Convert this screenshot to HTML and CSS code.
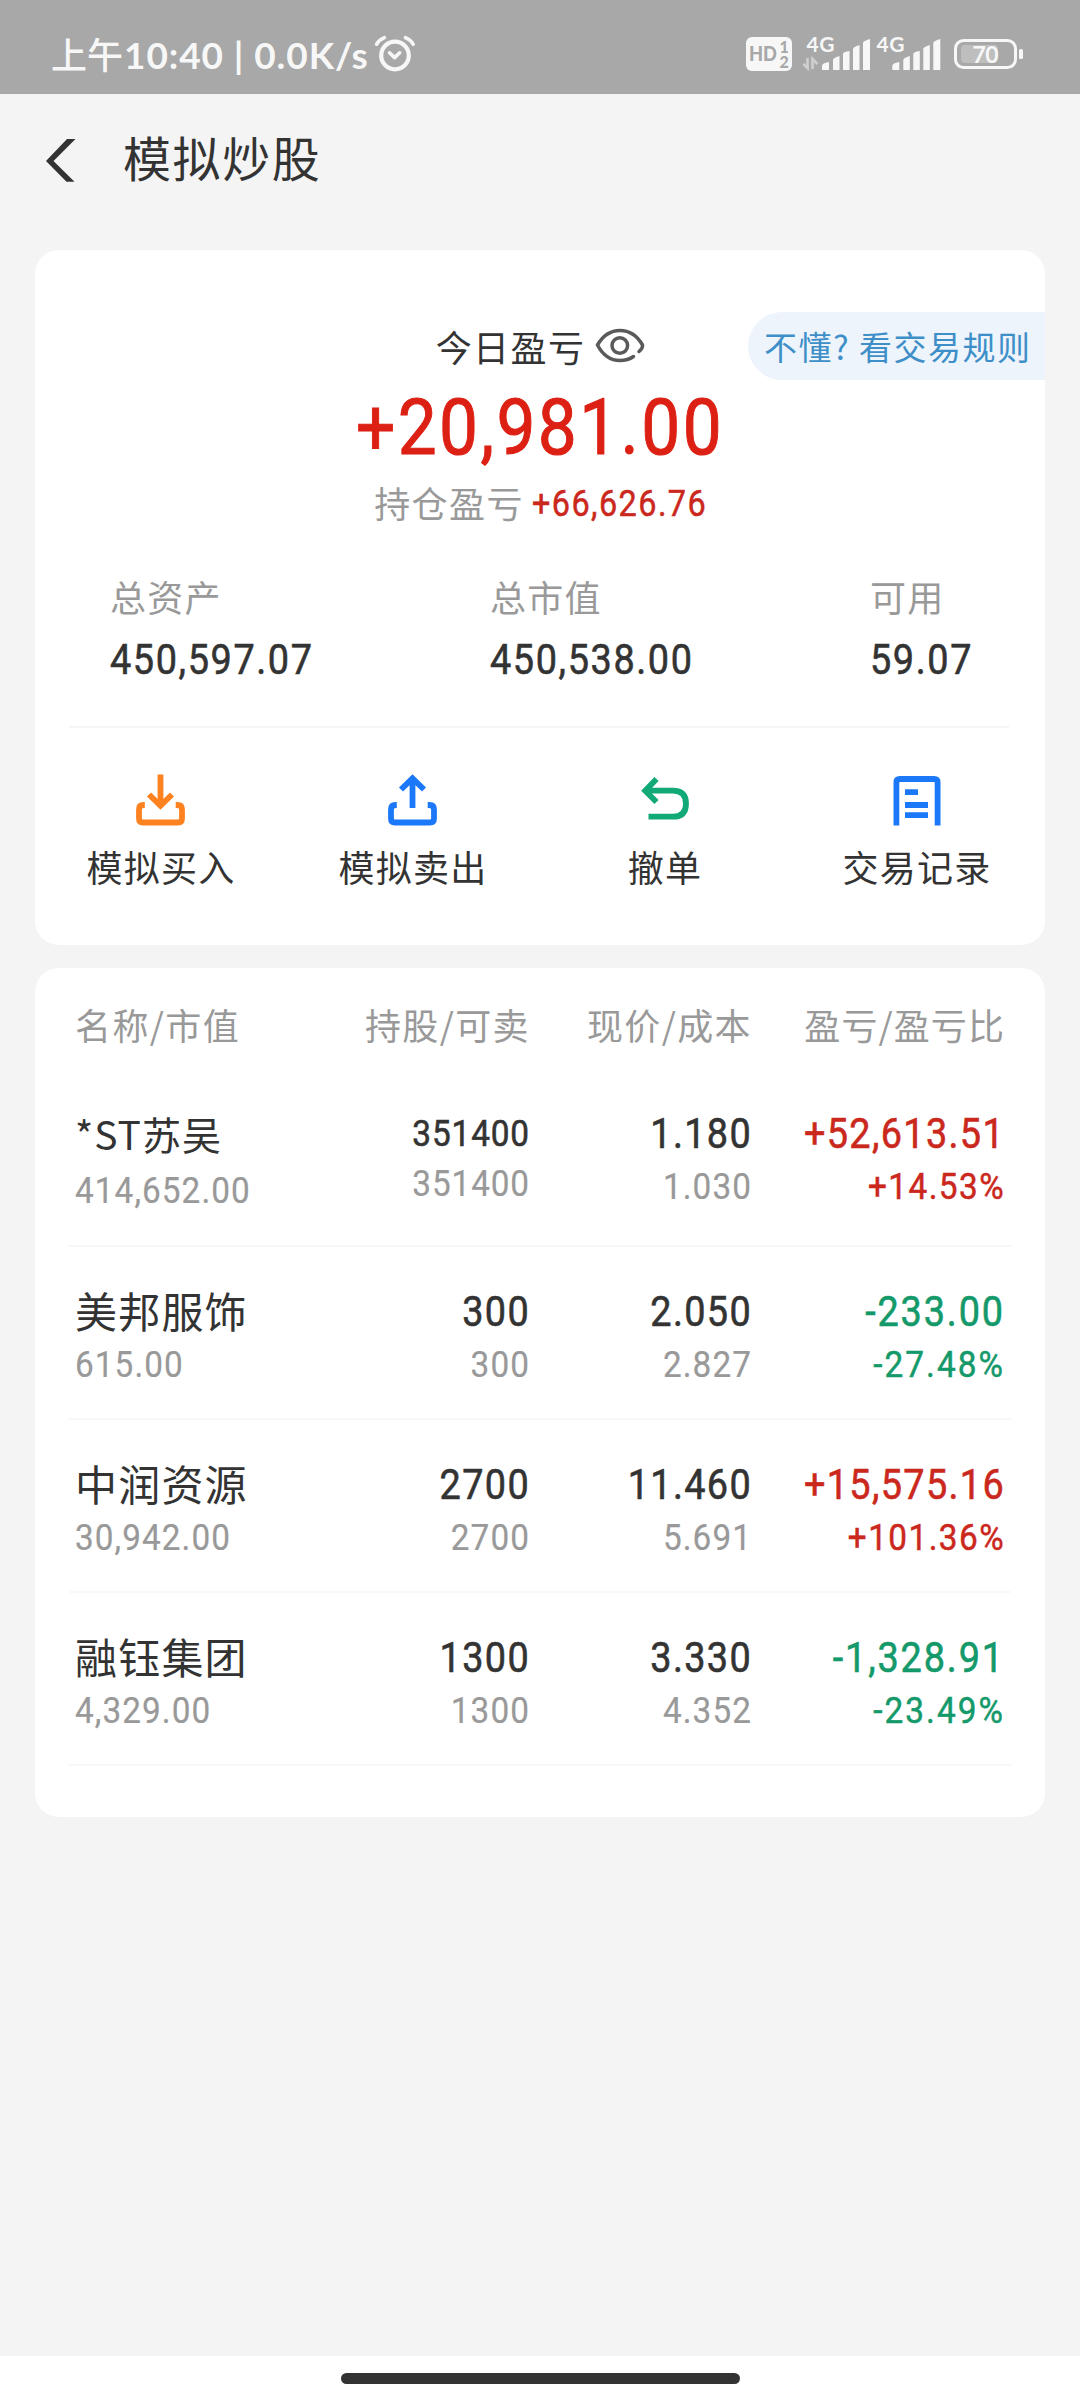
FILE: index.html
```html
<!DOCTYPE html>
<html lang="zh-CN">
<head>
<meta charset="utf-8">
<title>模拟炒股</title>
<link rel="stylesheet" href="styles.css">
</head>
<body>
<div class="screen">
  <header class="status">
    <div class="status-left">
      <span class="clock">上午<span class="latin">10:40 | 0.0K/s</span></span>
      <svg class="alarm" width="42" height="40" viewBox="374 34 42 40" fill="none" stroke="#f7f7f7" stroke-linecap="round">
        <circle cx="395" cy="55.5" r="13.8" stroke-width="4.2"/>
        <path d="M389.5 52.8l5.1 4.8 5.1-4.8" stroke-width="3.6" stroke-linejoin="round"/>
        <path d="M376.6 44.2q3-4.600 7.800-6.500M413.200 44.200q-3-4.600-7.800-6.500" stroke-width="3.600"/>
      </svg>
    </div>
    <svg class="signals" width="280" height="44" viewBox="746 32 280 44">
      <rect x="746" y="37" width="46" height="34" rx="6" fill="#f7f7f7"/>
      <text class="hd" x="749" y="61" textLength="28" lengthAdjust="spacingAndGlyphs">HD</text>
      <text class="sim" x="779.500" y="52.500">1</text>
      <text class="sim" x="779.500" y="68">2</text>
      <g fill="#f7f7f7">
        <text class="net" x="806.500" y="51.500" textLength="28">4G</text>
        <text class="net" x="876.500" y="51.500" textLength="28">4G</text>
        <path id="bars" d="M822 70v-4q0-3 7-4v8zM833 70V60q0-2 6.500-4v14zM843 70V54q0-2 6.500-3v19zM853 70V49q0-2 6.500-4v25zM863 70V43q0-2 7-4v31z"/>
        <use href="#bars" x="70.300"/>
      </g>
      <path d="M807.500 58v10l-4-4M809 68h-2M812.500 69V59l5 5" fill="none" stroke="#cfcfcf" stroke-width="2.600"/>
      <rect x="955.500" y="40.500" width="60" height="27" rx="8" fill="none" stroke="#f7f7f7" stroke-width="3"/>
      <rect x="961" y="45" width="37" height="18" rx="4" fill="#bebebe"/>
      <rect x="1019" y="49" width="4" height="10" rx="1.500" fill="#f7f7f7"/>
      <text class="power" x="972.500" y="62.500" textLength="26">70</text>
    </svg>
  </header>

  <nav class="nav">
    <svg class="back" width="30" height="44" viewBox="46 139 30 44"><path d="M67 139h8.500L53.500 161 74.500 181.800H66.500L46 161z" fill="#333"/></svg>
    <h1 class="title">模拟炒股</h1>
  </nav>

  <main class="content">
    <section class="card summary">
      <a class="rules">不懂? 看交易规则</a>
      <div class="today">
        <span>今日盈亏</span>
        <svg width="50" height="36" viewBox="596 328 50 36" fill="none" stroke="#5a5a5a" stroke-width="3.500" stroke-linecap="round">
          <path d="M640 351.500q4-3.500 3.500-6.500c-5.500-9.500-13-14.500-22.500-14.500s-17 5-22.500 14.500c5.500 10.500 13 15.500 22.500 15.500q8 0 13.500-4"/>
          <circle cx="620.800" cy="345.500" r="7.800"/>
        </svg>
      </div>
      <div class="today-value">+20,981.00</div>
      <div class="holding"><span>持仓盈亏</span><b class="holding-value">+66,626.76</b></div>
      <div class="totals">
        <div class="total"><span class="label">总资产</span><b>450,597.07</b></div>
        <div class="total"><span class="label">总市值</span><b>450,538.00</b></div>
        <div class="total"><span class="label">可用</span><b>59.07</b></div>
      </div>
      <div class="actions">
        <a class="action">
          <svg width="60" height="60" viewBox="131 770 60 60" fill="none" stroke="#ff8220" stroke-width="5.800">
            <path d="M160.500 774.500V806M149 794.500l11.500 11.300 11.500-11.300M144.800 805h-1.300q-4.500 0-4.500 4.500v9q0 4 4 4h35q4 0 4-4v-9q0-4.500-4.500-4.500h-1.800"/>
          </svg>模拟买入</a>
        <a class="action">
          <svg width="60" height="60" viewBox="383 770 60 60" fill="none" stroke="#1b78f8" stroke-width="5.800">
            <path d="M412.500 808V779M401 789.500l11.500-11.200 11.500 11.200M396.800 805h-1.300q-4.500 0-4.500 4.500v9q0 4 4 4h35q4 0 4-4v-9q0-4.500-4.500-4.500h-1.800"/>
          </svg>模拟卖出</a>
        <a class="action">
          <svg width="60" height="60" viewBox="635 770 60 60" fill="none" stroke="#11a978" stroke-width="5.800">
            <path d="M656.500 779l-11.300 11.700 11.300 11.300M645 790.700h28q13 0 13 13t-13 13h-24.500"/>
          </svg>撤单</a>
        <a class="action">
          <svg width="60" height="60" viewBox="887 770 60 60" fill="none" stroke="#1b78f8" stroke-width="5.800">
            <path d="M896.400 825.500V782.500q0-3.500 3.500-3.500h34.200q3.500 0 3.500 3.500v43M905 792.200h13M905 805h23M905 815.200h23"/>
          </svg>交易记录</a>
      </div>
    </section>

    <section class="card holdings">
      <div class="head">
        <span>名称/市值</span><span>持股/可卖</span><span>现价/成本</span><span class="tight">盈亏/盈亏比</span>
      </div>
      <div class="row first">
        <div class="cell"><strong class="name">*ST苏吴</strong><small>414,652.00</small></div>
        <div class="cell long"><b>351400</b><small>351400</small></div>
        <div class="cell"><b>1.180</b><small>1.030</small></div>
        <div class="cell up"><b>+52,613.51</b><small>+14.53%</small></div>
      </div>
      <div class="row">
        <div class="cell"><strong class="name">美邦服饰</strong><small>615.00</small></div>
        <div class="cell"><b>300</b><small>300</small></div>
        <div class="cell"><b>2.050</b><small>2.827</small></div>
        <div class="cell down"><b>-233.00</b><small>-27.48%</small></div>
      </div>
      <div class="row">
        <div class="cell"><strong class="name">中润资源</strong><small>30,942.00</small></div>
        <div class="cell"><b>2700</b><small>2700</small></div>
        <div class="cell"><b>11.460</b><small>5.691</small></div>
        <div class="cell up"><b>+15,575.16</b><small>+101.36%</small></div>
      </div>
      <div class="row">
        <div class="cell"><strong class="name">融钰集团</strong><small>4,329.00</small></div>
        <div class="cell"><b>1300</b><small>1300</small></div>
        <div class="cell"><b>3.330</b><small>4.352</small></div>
        <div class="cell down"><b>-1,328.91</b><small>-23.49%</small></div>
      </div>
    </section>
  </main>

  <footer class="home"><div class="handle"></div></footer>
</div>
</body>
</html>
```
FILE: styles.css
```css
* { box-sizing: border-box; }

body {
  margin: 0;
  background: #f4f4f4;
  color: #333;
  font-family: "Noto Sans CJK SC", sans-serif;
}

b, small, strong { font-weight: 400; }
svg { display: block; flex: none; }

.screen {
  display: flex;
  flex-direction: column;
  width: 1080px;
  height: 2400px;
}

/* status bar */
.status {
  display: flex;
  justify-content: space-between;
  height: 94px;
  padding: 32px 54px 0 51px;
  background: #a8a8a8;
  color: #f7f7f7;
}
.status-left { display: flex; gap: 4px; }
.clock {
  width: 319px;
  font-size: 36px;
  font-weight: 500;
  line-height: 42px;
  white-space: nowrap;
}
.latin {
  margin-left: 1px;
  font-family: Lato, sans-serif;
  font-size: 37px;
  font-weight: 700;
  letter-spacing: 0.9px;
}
.alarm { margin-top: 2px; }
.signals text { font-family: Lato, sans-serif; font-weight: 700; }
.signals .hd { font-size: 20px; font-weight: 900; fill: #a8a8a8; }
.signals .sim { font-size: 16px; font-weight: 900; fill: #a8a8a8; }
.signals .net { font-size: 21px; }
.signals .power { font-size: 23px; fill: #f7f7f7; }

/* title bar */
.nav {
  display: flex;
  gap: 47px;
  height: 146px;
  padding: 45px 46px 0;
}
.title {
  margin: -13px 0 0;
  font-size: 48px;
  font-weight: 400;
  line-height: 60px;
  letter-spacing: 1.6px;
}

.content {
  display: flex;
  flex: 1;
  flex-direction: column;
  gap: 23px;
  padding: 10px 35px 0;
}
.card {
  border-radius: 24px;
  background: #fff;
}

/* summary card */
.summary {
  position: relative;
  height: 695px;
  padding-top: 71px;
}
.rules {
  position: absolute;
  top: 62px;
  right: 0;
  width: 297px;
  height: 68px;
  padding-left: 16px;
  border-radius: 34px 0 0 34px;
  background: #edf4fc;
  color: #3e8fc8;
  font-size: 33px;
  line-height: 68px;
  letter-spacing: 1.5px;
  white-space: nowrap;
}
.today {
  display: flex;
  align-items: center;
  justify-content: center;
  gap: 10px;
  height: 50px;
  padding-left: 1px;
  font-size: 36px;
  line-height: 49px;
  letter-spacing: 1.4px;
}
.today-value {
  height: 110px;
  color: #dd2014;
  font-family: Roboto, sans-serif;
  font-size: 77px;
  font-weight: 400;
  line-height: 114px;
  letter-spacing: 2.7px;
  text-align: center;
  transform: scaleX(0.9);
  -webkit-text-stroke: 1px #dd2014;
}
.holding {
  display: flex;
  justify-content: center;
  gap: 8px;
  height: 46px;
  color: #999;
  font-size: 36px;
  line-height: 42px;
  letter-spacing: 1.4px;
}
.holding-value {
  width: 174px;
  color: #cb281d;
  font-family: Roboto, sans-serif;
  line-height: 46px;
  letter-spacing: 1.6px;
  transform: scaleX(0.9);
  transform-origin: left;
  -webkit-text-stroke: 0.5px #cb281d;
}
.totals {
  display: flex;
  height: 201px;
  margin: 0 36px 0 34px;
  padding: 40px 0 0 41px;
  border-bottom: 2px solid #f5f5f5;
}
.total { flex: 0 0 380px; }
.total:last-child { flex-basis: 100px; }
.label {
  display: block;
  height: 60px;
  color: #999;
  font-size: 36px;
  line-height: 58px;
  letter-spacing: 1.2px;
}
.total b {
  display: block;
  font-family: Roboto, sans-serif;
  font-size: 42px;
  line-height: 65px;
  letter-spacing: 1.8px;
  transform: scaleX(0.9);
  transform-origin: left;
  -webkit-text-stroke: 0.6px #333;
}
.actions {
  display: grid;
  grid-template-columns: repeat(4, 252px);
  padding-top: 42px;
}
.action {
  display: flex;
  flex-direction: column;
  align-items: center;
  gap: 10px;
  font-size: 36px;
  line-height: 52px;
  letter-spacing: 1.2px;
}

/* holdings card */
.holdings {
  height: 849px;
  padding: 28px 34px 0;
}
.head, .row {
  display: grid;
  grid-template-columns: 212px 243px 222px 253px;
  padding-left: 6px;
  text-align: right;
}
.head {
  height: 76px;
  color: #999;
  font-size: 36px;
  line-height: 56px;
  letter-spacing: 1.4px;
  white-space: nowrap;
}
.head .tight { letter-spacing: 1.1px; }
.head > :first-child, .row > :first-child { text-align: left; }
.row {
  height: 173px;
  padding-top: 40px;
  border-bottom: 2px solid #f8f8f8;
}
.row.first { height: 175px; padding-top: 37px; }
.cell {
  font-family: Roboto, sans-serif;
  white-space: nowrap;
}
.cell b {
  display: block;
  height: 50px;
  font-size: 42px;
  line-height: 50px;
  letter-spacing: 1.5px;
  transform: scaleX(0.9);
  transform-origin: right;
  -webkit-text-stroke: 0.6px currentColor;
}
.cell small {
  display: block;
  color: #999;
  font-size: 37px;
  line-height: 56px;
  letter-spacing: 1.2px;
  transform: scaleX(0.9);
  transform-origin: right;
  -webkit-text-stroke: 0.2px currentColor;
}
.cell:first-child small { transform-origin: left; }
.name {
  display: block;
  height: 50px;
  font-family: "Noto Sans CJK SC", sans-serif;
  font-size: 42px;
  line-height: 45px;
  letter-spacing: 1.2px;
}
.first .name { height: 54px; font-size: 39px; line-height: 49px; letter-spacing: 1px; }
.cell.long b { font-size: 37px; letter-spacing: 1px; }
.cell.long small { line-height: 50px; letter-spacing: 1px; }
.cell.up b, .cell.up small { color: #cb281d; }
.cell.down b, .cell.down small { color: #14996a; }
.cell.up small { letter-spacing: 1.6px; -webkit-text-stroke-width: 0.5px; }
.cell.down b { letter-spacing: 2.1px; }
.cell.down small { letter-spacing: 2.3px; -webkit-text-stroke-width: 0.5px; }

/* gesture bar */
.home {
  height: 44px;
  padding-top: 17px;
  background: #fff;
}
.handle {
  width: 399px;
  height: 11px;
  margin: 0 auto;
  border-radius: 6px;
  background: #333;
}
```
